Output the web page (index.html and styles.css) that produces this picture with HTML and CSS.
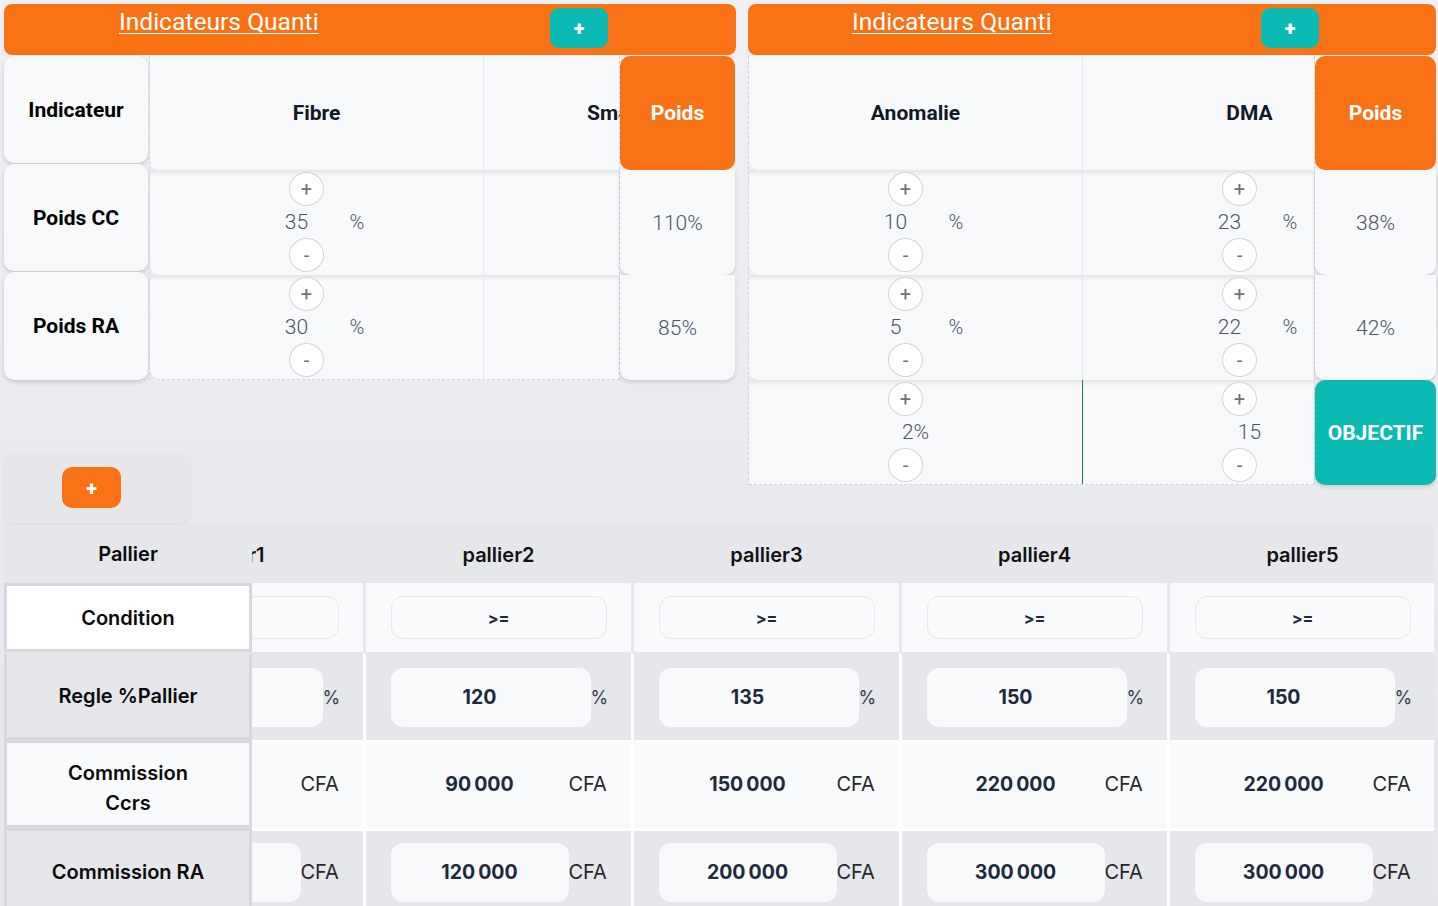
FILE: index.html
```html
<!DOCTYPE html>
<html lang="fr">
<head>
<meta charset="utf-8">
<title>Indicateurs Quanti</title>
<link rel="stylesheet" href="styles.css">
</head>
<body>
<div class="page">
  <div class="top">
    <div class="leftcol">
      <section class="panel panel-left">
        <header class="bar">
          <a href="#" class="bar-title">Indicateurs Quanti</a>
          <button class="btn-teal">+</button>
        </header>
        <div class="pbody">
          <div class="labels">
            <div class="lcard lc-h">Indicateur</div>
            <div class="lcard">Poids CC</div>
            <div class="lcard lc-last">Poids RA</div>
          </div>
          <div class="mid mid-left">
            <div class="mrow head">
              <div class="mcell">Fibre</div>
              <div class="mcell">Smartphones</div>
            </div>
            <div class="mrow">
              <div class="mcell vcell">
                <div class="step"><div class="step-col"><button class="circ">+</button><span class="step-val">35</span><button class="circ">-</button></div><span class="unit">%</span></div>
              </div>
              <div class="mcell vcell"></div>
            </div>
            <div class="mrow last">
              <div class="mcell vcell">
                <div class="step"><div class="step-col"><button class="circ">+</button><span class="step-val">30</span><button class="circ">-</button></div><span class="unit">%</span></div>
              </div>
              <div class="mcell vcell"></div>
            </div>
          </div>
          <div class="poids poids-left">
            <div class="poids-head">Poids</div>
            <div class="poids-val">110%</div>
            <div class="poids-val">85%</div>
          </div>
        </div>
      </section>
      <div class="add-card"><button class="btn-orange">+</button></div>
    </div>

    <section class="panel panel-right">
      <header class="bar">
        <a href="#" class="bar-title">Indicateurs Quanti</a>
        <button class="btn-teal">+</button>
      </header>
      <div class="pbody">
        <div class="mid mid-right">
          <div class="mrow head">
            <div class="mcell">Anomalie</div>
            <div class="mcell">DMA</div>
          </div>
          <div class="mrow">
            <div class="mcell vcell">
              <div class="step"><div class="step-col"><button class="circ">+</button><span class="step-val">10</span><button class="circ">-</button></div><span class="unit">%</span></div>
            </div>
            <div class="mcell vcell">
              <div class="step"><div class="step-col"><button class="circ">+</button><span class="step-val">23</span><button class="circ">-</button></div><span class="unit">%</span></div>
            </div>
          </div>
          <div class="mrow">
            <div class="mcell vcell">
              <div class="step"><div class="step-col"><button class="circ">+</button><span class="step-val">5</span><button class="circ">-</button></div><span class="unit">%</span></div>
            </div>
            <div class="mcell vcell">
              <div class="step"><div class="step-col"><button class="circ">+</button><span class="step-val">22</span><button class="circ">-</button></div><span class="unit">%</span></div>
            </div>
          </div>
          <div class="mrow obj">
            <div class="mcell vcell green">
              <div class="step"><div class="step-col"><button class="circ">+</button><span class="step-val obj-val">2%</span><button class="circ">-</button></div><span class="unit blank"></span></div>
            </div>
            <div class="mcell vcell">
              <div class="step"><div class="step-col"><button class="circ">+</button><span class="step-val obj-val">15</span><button class="circ">-</button></div><span class="unit blank"></span></div>
            </div>
          </div>
        </div>
        <div class="poids poids-right">
          <div class="poids-head">Poids</div>
          <div class="poids-val">38%</div>
          <div class="poids-val">42%</div>
          <div class="poids-obj">OBJECTIF</div>
        </div>
      </div>
    </section>
  </div>

  <div class="ptable">
    <div class="prow r-head">
      <div class="plabel">Pallier</div>
      <div class="pclip"><div class="ptrack">
        <div class="pcell">pallier1</div>
        <div class="pcell">pallier2</div>
        <div class="pcell">pallier3</div>
        <div class="pcell">pallier4</div>
        <div class="pcell">pallier5</div>
      </div></div>
    </div>
    <div class="prow r-cond">
      <div class="plabel">Condition</div>
      <div class="pclip"><div class="ptrack">
        <div class="pcell"><div class="sel"></div></div>
        <div class="pcell"><div class="sel">&gt;=</div></div>
        <div class="pcell"><div class="sel">&gt;=</div></div>
        <div class="pcell"><div class="sel">&gt;=</div></div>
        <div class="pcell"><div class="sel">&gt;=</div></div>
      </div></div>
    </div>
    <div class="prow r-regle">
      <div class="plabel">Regle %Pallier</div>
      <div class="pclip"><div class="ptrack">
        <div class="pcell"><div class="grp"><div class="inp inp-pct"></div><span class="pct">%</span></div></div>
        <div class="pcell"><div class="grp"><div class="inp inp-pct">120</div><span class="pct">%</span></div></div>
        <div class="pcell"><div class="grp"><div class="inp inp-pct">135</div><span class="pct">%</span></div></div>
        <div class="pcell"><div class="grp"><div class="inp inp-pct">150</div><span class="pct">%</span></div></div>
        <div class="pcell"><div class="grp"><div class="inp inp-pct">150</div><span class="pct">%</span></div></div>
      </div></div>
    </div>
    <div class="prow r-ccrs">
      <div class="plabel">Commission Ccrs</div>
      <div class="pclip"><div class="ptrack">
        <div class="pcell"><div class="grp"><div class="inp inp-cfa plain"></div><span class="cfa">CFA</span></div></div>
        <div class="pcell"><div class="grp"><div class="inp inp-cfa plain">90&#8239;000</div><span class="cfa">CFA</span></div></div>
        <div class="pcell"><div class="grp"><div class="inp inp-cfa plain">150&#8239;000</div><span class="cfa">CFA</span></div></div>
        <div class="pcell"><div class="grp"><div class="inp inp-cfa plain">220&#8239;000</div><span class="cfa">CFA</span></div></div>
        <div class="pcell"><div class="grp"><div class="inp inp-cfa plain">220&#8239;000</div><span class="cfa">CFA</span></div></div>
      </div></div>
    </div>
    <div class="prow r-ra">
      <div class="plabel">Commission RA</div>
      <div class="pclip"><div class="ptrack">
        <div class="pcell"><div class="grp"><div class="inp inp-cfa"></div><span class="cfa">CFA</span></div></div>
        <div class="pcell"><div class="grp"><div class="inp inp-cfa">120&#8239;000</div><span class="cfa">CFA</span></div></div>
        <div class="pcell"><div class="grp"><div class="inp inp-cfa">200&#8239;000</div><span class="cfa">CFA</span></div></div>
        <div class="pcell"><div class="grp"><div class="inp inp-cfa">300&#8239;000</div><span class="cfa">CFA</span></div></div>
        <div class="pcell"><div class="grp"><div class="inp inp-cfa">300&#8239;000</div><span class="cfa">CFA</span></div></div>
      </div></div>
    </div>
  </div>
</div>
</body>
</html>
```

FILE: styles.css
```css
* { box-sizing: border-box; }
html, body { margin: 0; padding: 0; }
body {
  width: 1438px;
  height: 906px;
  overflow: hidden;
  background: linear-gradient(180deg, #eff0f3 0%, #eaebee 55%, #e5e7eb 100%);
  font-family: Roboto, "Liberation Sans", sans-serif;
}
.page { padding: 4px 4px 0 4px; }

/* ---------- top panels ---------- */
.top { display: flex; gap: 12px; align-items: flex-start; }
.leftcol { width: 732px; display: flex; flex-direction: column; align-items: flex-start; }
.panel-left { width: 732px; }
.panel-right { width: 688px; }

.bar {
  height: 51px;
  background: #f97316;
  border-radius: 8px;
  display: flex;
  justify-content: space-around;
  align-items: flex-start;
}
.bar-title {
  width: 201px;
  margin-top: 4px;
  font-size: 24.6px;
  line-height: 28px;
  color: #fff;
  text-decoration: underline;
  text-underline-offset: 3px;
  text-decoration-thickness: 1px;
  white-space: nowrap;
}
.btn-teal {
  width: 58px;
  height: 40px;
  margin-top: 4px;
  margin-right: 13px;
  border: 0;
  border-radius: 9px;
  background: #0cbab4;
  color: #fff;
  font-family: Roboto, sans-serif;
  font-weight: 900;
  font-size: 20px;
  padding: 0;
}

.pbody { display: flex; align-items: flex-start; margin-top: 1px; }

.labels { width: 145px; display: flex; flex-direction: column; gap: 1px; flex: none; }
.lcard {
  width: 144px;
  height: 107px;
  background: #f8f9fb;
  border-radius: 10px;
  box-shadow: 0 2px 4px rgba(0, 0, 0, 0.16);
  display: flex;
  align-items: center;
  justify-content: center;
  font-size: 21px;
  font-weight: 700;
  color: #000;
}
.lc-last { height: 108px; }

.mid {
  flex: none;
  overflow: hidden;
  border-left: 1px dashed #d1d5db;
}
.mid-left { width: 471px; }
.mid-right { width: 566px; }

.mrow {
  display: flex;
  height: 105px;
  width: 100%;
  background: #f8f9fb;
  border-radius: 0 0 0 10px;
  box-shadow: inset 0 7px 6px -6px rgba(0, 0, 0, 0.14);
}
.mrow.head {
  height: 114px;
  border-radius: 0 0 0 10px;
  box-shadow: none;
}
.mrow.last { border-bottom: 1px dashed #d1d5db; border-radius: 0 0 0 10px; }
.mrow.obj { border-radius: 0; border-bottom: 1px dashed #d1d5db; }

.mcell {
  flex: none;
  width: 334px;
  border-right: 1px solid #e5e7eb;
  display: flex;
  align-items: center;
  justify-content: center;
  font-size: 21px;
  font-weight: 700;
  color: #111827;
  white-space: nowrap;
}
.mcell.vcell { align-items: flex-start; padding-top: 2px; font-weight: 300; }
.mcell.green { border-right-color: #15803d; }

.step { display: flex; align-items: center; }
.step-col { width: 74px; display: flex; flex-direction: column; align-items: center; }
.circ {
  width: 35px;
  height: 34px;
  padding: 0;
  border: 1px solid #d1d5db;
  border-radius: 50%;
  background: #fff;
  color: #6b7280;
  font-family: Roboto, sans-serif;
  font-size: 20px;
  line-height: 30px;
  font-weight: 400;
}
.step-val {
  width: 74px;
  height: 32px;
  line-height: 32px;
  padding-right: 20px;
  text-align: center;
  font-size: 21px;
  font-weight: 300;
  color: #4b5563;
}
.step-val.obj-val { padding-right: 0; padding-left: 20px; }
.unit {
  width: 14px;
  margin-left: 6px;
  font-size: 20px;
  font-weight: 300;
  color: #4b5563;
}

.poids { flex: none; display: flex; flex-direction: column; border-left: 1px dashed #d1d5db; }
.poids-left { width: 116px; margin-left: -1px; }
.poids-right { width: 122px; }
.poids-head {
  height: 114px;
  background: #f97316;
  border-radius: 10px;
  display: flex;
  align-items: center;
  justify-content: center;
  color: #fff;
  font-size: 21px;
  font-weight: 700;
}
.poids-val {
  height: 105px;
  background: #f8f9fb;
  border-radius: 0 0 10px 10px;
  box-shadow: 0 2px 4px rgba(0, 0, 0, 0.14);
  display: flex;
  align-items: center;
  justify-content: center;
  font-size: 21px;
  font-weight: 300;
  color: #4b5563;
}
.poids-obj {
  height: 105px;
  background: #0cbab4;
  border-radius: 10px;
  box-shadow: 0 2px 4px rgba(0, 0, 0, 0.14);
  display: flex;
  align-items: center;
  justify-content: center;
  color: #fff;
  font-size: 21px;
  font-weight: 700;
}

.add-card {
  margin-top: 73px;
  width: 187px;
  height: 70px;
  background: #e5e7eb;
  border-radius: 10px;
  box-shadow: 0 1px 3px rgba(0, 0, 0, 0.08);
  padding: 14px 0 0 58px;
}
.btn-orange {
  width: 59px;
  height: 41px;
  border: 0;
  border-radius: 10px;
  background: #f97316;
  color: #fff;
  font-family: Roboto, sans-serif;
  font-weight: 900;
  font-size: 20px;
  padding: 0;
}

/* ---------- pallier table ---------- */
.ptable {
  width: 1430px;
  margin-top: 1px;
  font-family: Inter, "Liberation Sans", sans-serif;
}
.prow { display: flex; }
.plabel {
  flex: none;
  width: 248px;
  display: flex;
  align-items: center;
  justify-content: center;
  text-align: center;
  padding: 0 42px;
  font-size: 20px;
  font-weight: 600;
  line-height: 30px;
  color: #0a0a0a;
  border: 3px solid #d6d8de;
}
.pclip { flex: 1; overflow: hidden; }
.ptrack { display: flex; height: 100%; margin-left: -157px; }
.pcell {
  flex: none;
  width: 268px;
  border-left: 3px solid #fff;
  border-top: 3px solid #fff;
  padding-bottom: 3px;
  display: flex;
  align-items: center;
  justify-content: center;
}

.r-head { height: 59px; background: #e5e7eb; }
.r-head .plabel { border-color: transparent; }
.r-head .pcell {
  border-color: transparent;
  padding-bottom: 0;
  font-size: 20px;
  font-weight: 600;
  color: #111;
}

.r-cond { height: 69px; }
.r-cond .plabel { background: #fff; }
.r-cond .pcell { background: #f9fafb; border-left-color: #e5e7eb; border-top: 0; padding-bottom: 0; }

.r-regle { height: 88px; }
.r-regle .plabel { background: #e5e7eb; border-top-color: #e5e7eb; }
.r-regle .pcell { background: #e5e7eb; border-top-color: #e5e7eb; padding-bottom: 1px; }

.r-ccrs { height: 88px; }
.r-ccrs .plabel { background: #f9fafb; padding-top: 7px; }
.r-ccrs .pcell { background: #f9fafb; }

.r-ra { height: 88px; }
.r-ra .plabel { background: #e5e7eb; }
.r-ra .pcell { background: #e5e7eb; }

.sel {
  width: 216px;
  height: 43px;
  border: 1px solid #e5e7eb;
  border-radius: 12px;
  background: #f9fafb;
  display: flex;
  align-items: center;
  justify-content: center;
  font-size: 16px;
  font-weight: 700;
  color: #1e293b;
}
.grp { width: 216px; display: flex; align-items: center; }
.inp {
  height: 59px;
  border-radius: 12px;
  background: #f9fafb;
  display: flex;
  align-items: center;
  justify-content: center;
  font-size: 19.5px;
  font-weight: 700;
  color: #1e293b;
  white-space: nowrap;
}
.inp-pct { width: 200px; padding-right: 22px; }
.inp-cfa { width: 178px; letter-spacing: -0.3px; }
.inp.plain { background: transparent; }
.pct { width: 16px; font-size: 18px; color: #374151; text-align: center; }
.cfa { width: 38px; font-size: 20px; color: #27272a; text-align: right; white-space: nowrap; }
```
